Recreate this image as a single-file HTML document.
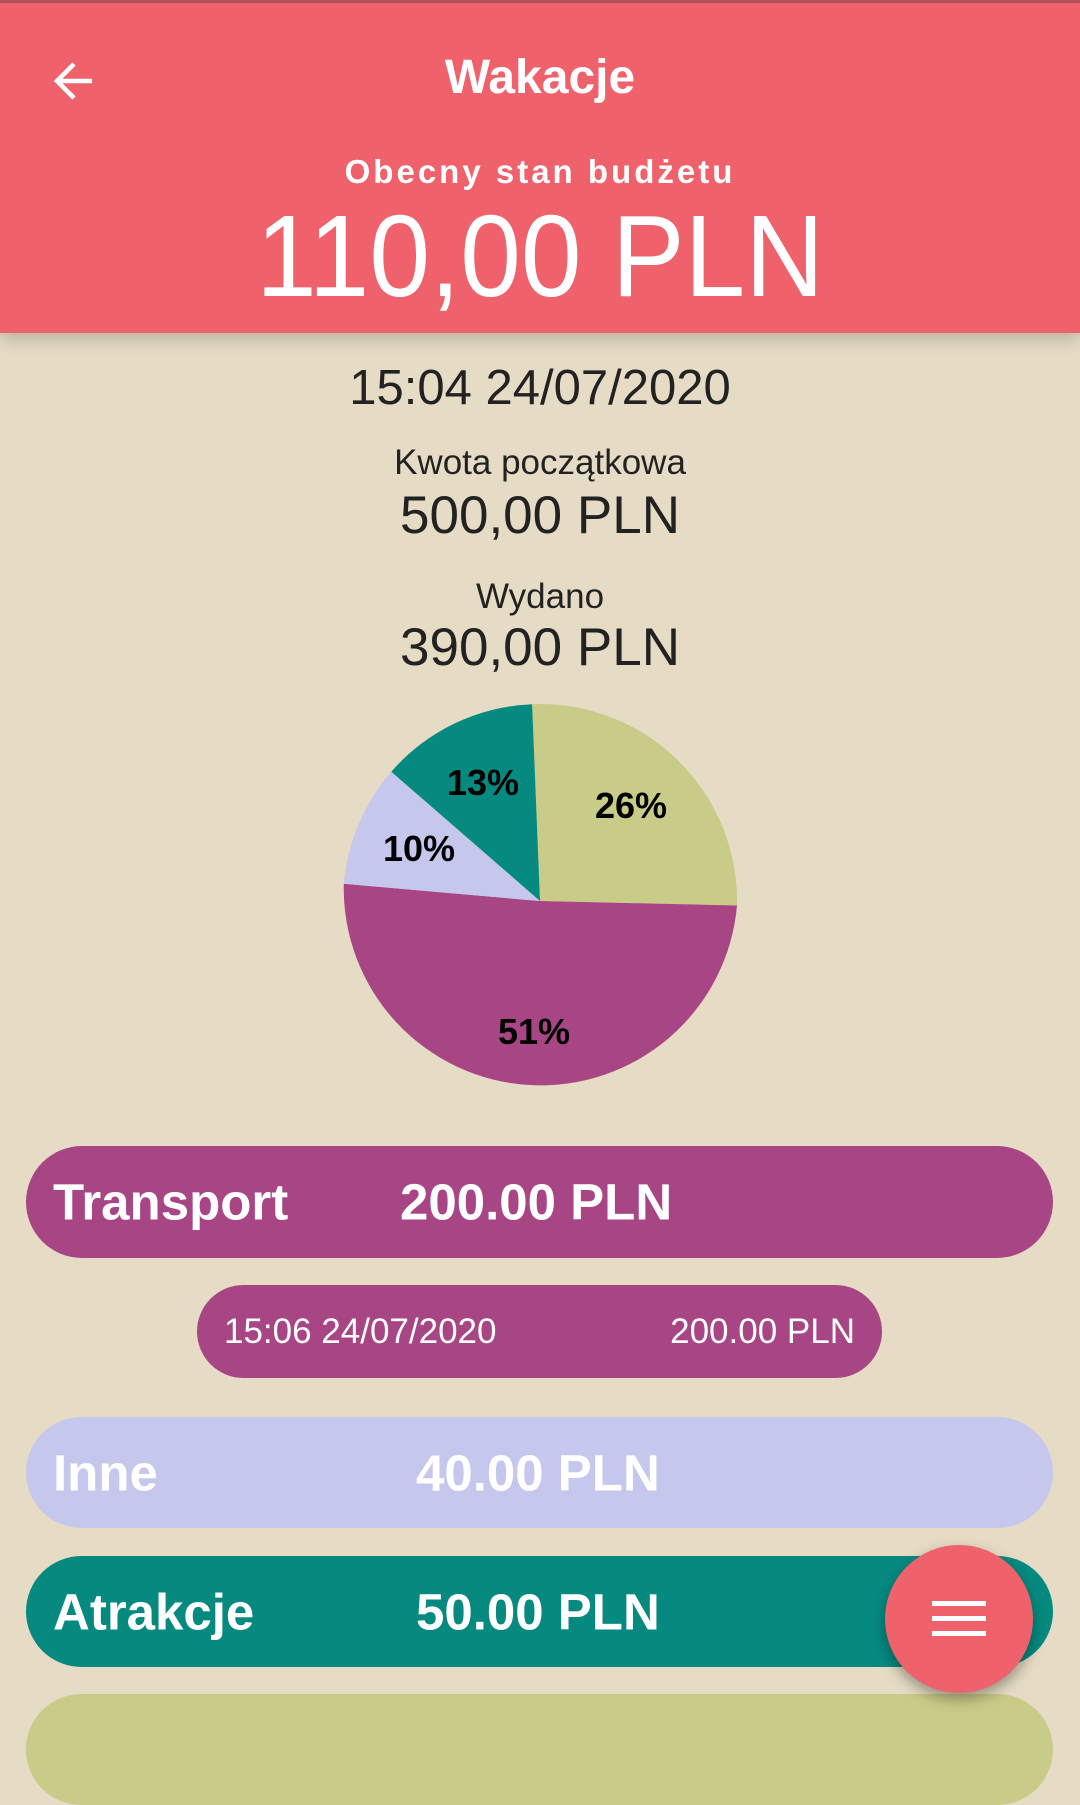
<!DOCTYPE html>
<html><head><meta charset="utf-8"><style>
*{margin:0;padding:0;box-sizing:border-box}
body{width:1080px;height:1731px;overflow:hidden;background:#E6DCC5;font-family:"Liberation Sans",Roboto,sans-serif;position:relative;color:#222}
.hdr{position:absolute;left:0;top:0;width:1080px;height:333px;background:#EF626C;border-top:3px solid #B34F57;box-shadow:0 6px 16px rgba(0,0,0,.2)}
.c{position:absolute;left:0;width:1080px;text-align:center;white-space:nowrap}
.bar{position:absolute;border-radius:60px;color:#fff;font-weight:bold;white-space:nowrap}
.bar span{position:absolute;top:50%;transform:translateY(-50%)}
</style></head><body>
<div class="hdr">
<svg style="position:absolute;left:50px;top:54px" width="48" height="48" viewBox="0 0 48 48"><path d="M42 24H8M24 7L7 24l17 17" stroke="#fff" stroke-width="4.5" fill="none"/></svg>
<div class="c" style="top:47px;font-size:48px;font-weight:bold;color:#fff">Wakacje</div>
<div class="c" style="top:150px;font-size:33px;font-weight:bold;color:#fff;letter-spacing:3px">Obecny stan budżetu</div>
<div class="c" style="top:186px;font-size:116px;color:#fff"><span style="display:inline-block;transform:scaleX(0.94)">110,00 PLN</span></div>
</div>
<div class="c" style="top:360px;font-size:49px">15:04 24/07/2020</div>
<div class="c" style="top:443px;font-size:35px">Kwota początkowa</div>
<div class="c" style="top:485px;font-size:53px">500,00 PLN</div>
<div class="c" style="top:577px;font-size:35px">Wydano</div>
<div class="c" style="top:617px;font-size:53px">390,00 PLN</div>
<svg style="position:absolute;left:0;top:0" width="1080" height="1200">
<path d="M540 901L532.1 704.2A197 197 0 0 1 737 905.5Z" fill="#C9CB88"/>
<path d="M540 901L737 905.5A197 197 0 0 1 343.8 883.8Z" fill="#A84685"/>
<path d="M540 901L343.8 883.8A197 197 0 0 1 391.3 771.7Z" fill="#C5C8EC"/>
<path d="M540 901L391.3 771.7A197 197 0 0 1 532.1 704.2Z" fill="#068A80"/>
<g font-family="Liberation Sans,sans-serif" font-weight="bold" font-size="36" text-anchor="middle" fill="#000">
<text x="631" y="818">26%</text><text x="534" y="1044">51%</text><text x="419" y="861">10%</text><text x="483" y="795">13%</text>
</g></svg>
<div class="bar" style="left:26px;top:1146px;width:1027px;height:112px;background:#A84685;font-size:51px"><span style="left:27px">Transport</span><span style="left:374px">200.00 PLN</span></div>
<div class="bar" style="left:197px;top:1285px;width:685px;height:93px;background:#A84685;font-size:35px;font-weight:normal"><span style="left:27px">15:06 24/07/2020</span><span style="right:27px">200.00 PLN</span></div>
<div class="bar" style="left:26px;top:1417px;width:1027px;height:111px;background:#C5C8EC;font-size:51px"><span style="left:27px">Inne</span><span style="left:390px">40.00 PLN</span></div>
<div class="bar" style="left:26px;top:1556px;width:1027px;height:111px;background:#068A80;font-size:51px"><span style="left:27px">Atrakcje</span><span style="left:390px">50.00 PLN</span></div>
<div class="bar" style="left:26px;top:1694px;width:1027px;height:111px;background:#C9CB88"></div>
<div style="position:absolute;left:885px;top:1545px;width:148px;height:148px;border-radius:50%;background:#EF626C;box-shadow:0 6px 14px rgba(0,0,0,.35)">
<div style="position:absolute;left:47px;top:56px;width:54px;height:5px;background:#fff"></div>
<div style="position:absolute;left:47px;top:71px;width:54px;height:5px;background:#fff"></div>
<div style="position:absolute;left:47px;top:86px;width:54px;height:5px;background:#fff"></div>
</div>
</body></html>
